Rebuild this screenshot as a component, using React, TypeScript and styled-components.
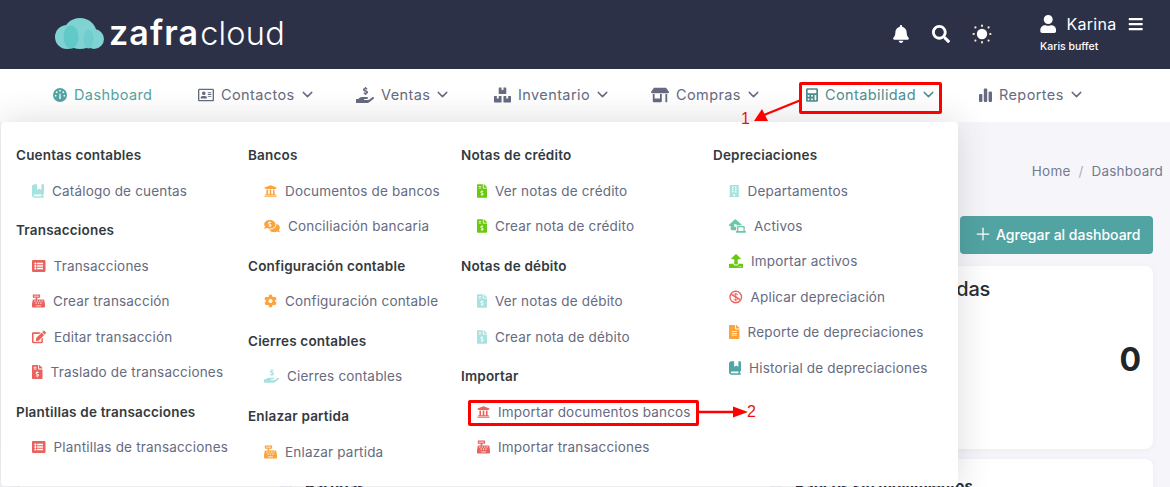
import React from 'react';
import styled, { createGlobalStyle } from 'styled-components';
import {
  FaBars, FaBell, FaBoxes, FaBuilding, FaCalculator, FaCashRegister, FaCog,
  FaCommentsDollar, FaEdit, FaFileAlt, FaFileInvoiceDollar, FaHandHoldingUsd, FaListAlt, FaRegAddressCard, FaSearch,
  FaStoreAlt, FaUniversity, FaUpload, FaUser,
} from 'react-icons/fa';
import { FaBookBookmark, FaHouseLaptop } from 'react-icons/fa6';
import { ChevronDown, Plus } from 'lucide-react';

const GlobalStyle = createGlobalStyle`
  html, body {
    margin: 0;
    height: 487px;
    overflow: hidden;
    background: #f6f6fa;
    font-family: Inter, "Open Sans", sans-serif;
  }
`;

const Page = styled.div`
  position: relative;
  width: 1170px;
  height: 487px;
  overflow: hidden;
`;

const Header = styled.header`
  display: flex;
  align-items: center;
  height: 69px;
  padding: 0 27px 0 55px;
  box-sizing: border-box;
  background: #2c3148;
  color: #fff;
`;

const Logo = styled.div`
  display: flex;
  align-items: center;
  gap: 4px;
  margin-top: -2px;
`;

const LogoText = styled.span<{ $light?: boolean }>`
  font-size: ${p => (p.$light ? '32.5px' : '34px')};
  font-weight: ${p => (p.$light ? 300 : 600)};
  letter-spacing: ${p => (p.$light ? '0.2px' : '1.1px')};
  margin-left: ${p => (p.$light ? '1px' : '0')};
  line-height: 40px;
`;

const HeaderTools = styled.div`
  display: flex;
  align-items: center;
  gap: 22px;
  margin-left: auto;
  font-size: 18px;
  margin-top: -2px;
`;

const UserBlock = styled.div`
  display: flex;
  flex-direction: column;
  gap: 7px;
  width: 103px;
  margin-left: 26px;
  margin-top: 1px;
`;

const UserRow = styled.div`
  display: flex;
  align-items: center;
  font-size: 16px;
  font-weight: 400;
  height: 18px;
  svg:first-child { margin-right: 10px; width: 17px; height: 18px; }
  svg:last-child { margin-left: 11px; }
`;

const UserName = styled.span`
  letter-spacing: 0.3px;
`;

const UserSub = styled.span`
  font-size: 10.5px;
  font-weight: 500;
  line-height: 13px;
`;

const Nav = styled.nav`
  display: flex;
  align-items: center;
  height: 53px;
  padding: 0 0 2px 53px;
  box-sizing: border-box;
  background: #fff;
`;

const NavItem = styled.a<{ $w: number; $color?: string }>`
  display: flex;
  align-items: center;
  flex: none;
  width: ${p => p.$w}px;
  font-size: 14.5px;
  letter-spacing: 0.4px;
  color: ${p => p.$color || '#666b80'};
`;

const NavIcon = styled.span<{ $w: number }>`
  display: inline-flex;
  justify-content: center;
  width: ${p => p.$w}px;
  margin-right: 7px;
  svg {
    width: ${p => p.$w}px;
    height: 16px;
  }
`;

const Chevron = styled(ChevronDown)`
  flex: none;
  width: 17px;
  height: 17px;
  margin-left: 4px;
`;

const Content = styled.main`
  padding: 0 17px 0 20px;
`;

const Crumbs = styled.div`
  display: flex;
  justify-content: flex-end;
  gap: 8px;
  margin: 0 -10px 0 0;
  padding-top: 41px;
  height: 17px;
  font-size: 13.5px;
  letter-spacing: 0.2px;
  line-height: 17px;
  color: #747a90;
`;

const CrumbSep = styled.span`
  color: #a8abb8;
`;

const ActionRow = styled.div`
  display: flex;
  justify-content: flex-end;
  margin-top: 36px;
`;

const AddButton = styled.button`
  display: flex;
  align-items: center;
  gap: 3px;
  width: 193px;
  height: 38px;
  padding: 0 0 2px 13px;
  border: 0;
  border-radius: 4px;
  background: #52a4a3;
  color: #fff;
  font: 500 14px Inter, sans-serif;
`;

const CardGrid = styled.section`
  display: grid;
  grid-template-columns: 260px 478px 371px;
  gap: 10px 12px;
  margin-top: 12px;
`;

const Card = styled.div<{ $h: number }>`
  position: relative;
  height: ${p => p.$h}px;
  padding: 11px 12px 0 13px;
  box-sizing: border-box;
  background: #fff;
  border-radius: 8px;
  box-shadow: 0 1px 6px rgba(40, 44, 70, 0.05);
`;

const CardTitle = styled.div<{ $small?: boolean }>`
  font-size: ${p => (p.$small ? '15px' : '20px')};
  font-weight: ${p => (p.$small ? 700 : 500)};
  letter-spacing: ${p => (p.$small ? '0' : '-0.25px')};
  color: #2b2e36;
  line-height: 24px;
  margin-top: ${p => (p.$small ? '5px' : '0')};
`;

const CardValue = styled.div`
  margin-top: 37px;
  text-align: right;
  font-size: 32px;
  font-weight: 700;
  line-height: 44px;
  color: #212529;
`;

const Menu = styled.div`
  position: absolute;
  left: 1px;
  top: 122px;
  width: 957px;
  height: 364px;
  box-sizing: border-box;
  padding: 16px 0 0 15px;
  display: grid;
  grid-template-columns: 232px 213px 252px 1fr;
  background: #fff;
  border-radius: 4px;
  box-shadow: 0 0 34px rgba(30, 32, 50, 0.16);
`;

const Section = styled.div`
  margin-bottom: 4.8px;
`;

const SectionTitle = styled.div`
  height: 35px;
  line-height: 35px;
  font-size: 13.5px;
  font-weight: 600;
  letter-spacing: 0.19px;
  color: #343a40;
`;

const Item = styled.a`
  display: flex;
  align-items: center;
  height: 35.4px;
  padding-left: 16px;
  font-size: 13.5px;
  letter-spacing: 0.18px;
  color: #666b80;
  white-space: nowrap;
`;

const ItemIcon = styled.span<{ $w: number; $color: string }>`
  display: inline-flex;
  flex: none;
  justify-content: flex-start;
  width: ${p => p.$w}px;
  margin-right: 8px;
  color: ${p => p.$color};
  svg {
    width: ${p => p.$w}px;
    height: 14px;
  }
`;

const RedBox = styled.div<{ $x: number; $y: number; $w: number; $h: number }>`
  position: absolute;
  left: ${p => p.$x}px;
  top: ${p => p.$y}px;
  width: ${p => p.$w}px;
  height: ${p => p.$h}px;
  box-sizing: border-box;
  border: 3px solid #f00;
  border-radius: 2px;
`;

const Arrow = styled.svg<{ $x: number; $y: number }>`
  position: absolute;
  left: ${p => p.$x}px;
  top: ${p => p.$y}px;
`;

const StepLabel = styled.span<{ $x: number; $y: number }>`
  position: absolute;
  left: ${p => p.$x}px;
  top: ${p => p.$y}px;
  font: 16px/18px "Liberation Sans", sans-serif;
  color: #e81010;
`;

const CloudLogo = () => (
  <svg width="50" height="32" viewBox="0 0 50 32">
    <circle cx="12" cy="19" r="12" fill="#7fd3d3" />
    <ellipse cx="25" cy="15.5" rx="16.5" ry="15.5" fill="#7fd3d3" />
    <circle cx="39" cy="21" r="10" fill="#7fd3d3" />
    <ellipse cx="16" cy="19" rx="7.5" ry="11.5" fill="#62c9c9" />
    <ellipse cx="33.5" cy="21" rx="5" ry="9.5" fill="#6fcdcd" />
  </svg>
);

const SunIcon = () => (
  <svg width="20" height="20" viewBox="0 0 20 20">
    <circle cx="10" cy="10" r="5.2" fill="#fff" />
    <g fill="#ffe9b8">
      <rect x="9" y="0.5" width="2" height="2.4" rx="1" />
      <rect x="9" y="17.1" width="2" height="2.4" rx="1" />
      <rect x="0.5" y="9" width="2.4" height="2" rx="1" />
      <rect x="17.1" y="9" width="2.4" height="2" rx="1" />
      <circle cx="3.4" cy="3.4" r="1.1" />
      <circle cx="16.6" cy="3.4" r="1.1" />
      <circle cx="3.4" cy="16.6" r="1.1" />
      <circle cx="16.6" cy="16.6" r="1.1" />
    </g>
  </svg>
);

const GaugeIcon = () => (
  <svg viewBox="0 0 16 16">
    <circle cx="8" cy="8" r="8" fill="currentColor" />
    <g fill="#fff">
      <circle cx="8" cy="3" r="1" />
      <circle cx="4.2" cy="4.8" r="1" />
      <circle cx="11.8" cy="4.8" r="1" />
      <circle cx="3" cy="8.8" r="1" />
      <circle cx="13" cy="8.8" r="1" />
      <path d="M7.2 12.6 7.4 6.2h1.2l.2 6.4Z" />
    </g>
  </svg>
);

const BarsIcon = () => (
  <svg viewBox="0 0 13 16" fill="currentColor">
    <rect x="0" y="7" width="3.4" height="8" rx="1" />
    <rect x="4.8" y="1.5" width="3.4" height="13.5" rx="1" />
    <rect x="9.6" y="4.5" width="3.4" height="10.5" rx="1" />
  </svg>
);

const NoDollarIcon = () => (
  <svg viewBox="0 0 14 14" fill="none" stroke="currentColor">
    <circle cx="7" cy="7" r="6" strokeWidth="1.4" />
    <path d="M9.2 4.8C8.6 4 7.8 3.8 7 3.8c-1.3 0-2.1.7-2.1 1.6C4.9 7.6 9.2 6.4 9.2 8.6c0 1-.9 1.6-2.2 1.6-.9 0-1.7-.3-2.3-1.1M7 2.8v8.4" strokeWidth="1" />
    <path d="M2.4 4.2 11.6 9.8" strokeWidth="1.4" />
  </svg>
);

type MenuItem = { label: string; icon: React.ReactNode; color: string; w: number };
type MenuSection = { title: string; items: MenuItem[] };

const RED = '#e9635e';
const ORANGE = '#fca43c';
const TEAL = '#a8e2e0';
const GREEN = '#69c90f';

const columns: MenuSection[][] = [
  [
    { title: 'Cuentas contables', items: [{ label: 'Catálogo de cuentas', icon: <FaBookBookmark />, color: TEAL, w: 12 }] },
    {
      title: 'Transacciones',
      items: [
        { label: 'Transacciones', icon: <FaListAlt />, color: RED, w: 13.5 },
        { label: 'Crear transacción', icon: <FaCashRegister />, color: RED, w: 13 },
        { label: 'Editar transacción', icon: <FaEdit />, color: RED, w: 14 },
        { label: 'Traslado de transacciones', icon: <FaFileInvoiceDollar />, color: RED, w: 10.5 },
      ],
    },
    { title: 'Plantillas de transacciones', items: [{ label: 'Plantillas de transacciones', icon: <FaListAlt />, color: RED, w: 13.5 }] },
  ],
  [
    {
      title: 'Bancos',
      items: [
        { label: 'Documentos de bancos', icon: <FaUniversity />, color: ORANGE, w: 13 },
        { label: 'Conciliación bancaria', icon: <FaCommentsDollar />, color: ORANGE, w: 16 },
      ],
    },
    { title: 'Configuración contable', items: [{ label: 'Configuración contable', icon: <FaCog />, color: ORANGE, w: 13 }] },
    { title: 'Cierres contables', items: [{ label: 'Cierres contables', icon: <FaHandHoldingUsd />, color: TEAL, w: 15 }] },
    { title: 'Enlazar partida', items: [{ label: 'Enlazar partida', icon: <FaCashRegister />, color: ORANGE, w: 13 }] },
  ],
  [
    {
      title: 'Notas de crédito',
      items: [
        { label: 'Ver notas de crédito', icon: <FaFileInvoiceDollar />, color: GREEN, w: 10 },
        { label: 'Crear nota de crédito', icon: <FaFileInvoiceDollar />, color: GREEN, w: 10 },
      ],
    },
    {
      title: 'Notas de débito',
      items: [
        { label: 'Ver notas de débito', icon: <FaFileInvoiceDollar />, color: TEAL, w: 10 },
        { label: 'Crear nota de débito', icon: <FaFileInvoiceDollar />, color: TEAL, w: 10 },
      ],
    },
    {
      title: 'Importar',
      items: [
        { label: 'Importar documentos bancos', icon: <FaUniversity />, color: RED, w: 13 },
        { label: 'Importar transacciones', icon: <FaCashRegister />, color: RED, w: 13 },
      ],
    },
  ],
  [
    {
      title: 'Depreciaciones',
      items: [
        { label: 'Departamentos', icon: <FaBuilding />, color: TEAL, w: 10.5 },
        { label: 'Activos', icon: <FaHouseLaptop />, color: '#6bc6ab', w: 17 },
        { label: 'Importar activos', icon: <FaUpload />, color: GREEN, w: 14 },
        { label: 'Aplicar depreciación', icon: <NoDollarIcon />, color: RED, w: 13.5 },
        { label: 'Reporte de depreciaciones', icon: <FaFileAlt />, color: ORANGE, w: 10.5 },
        { label: 'Historial de depreciaciones', icon: <FaBookBookmark />, color: '#4fa6a6', w: 12 },
      ],
    },
  ],
];

const navItems = [
  { label: 'Dashboard', icon: <GaugeIcon />, iconW: 14, w: 145, color: '#52a4a3', noChevron: true },
  { label: 'Contactos', icon: <FaRegAddressCard />, iconW: 16, w: 158 },
  { label: 'Ventas', icon: <FaHandHoldingUsd />, iconW: 18, w: 138 },
  { label: 'Inventario', icon: <FaBoxes />, iconW: 17, w: 157 },
  { label: 'Compras', icon: <FaStoreAlt />, iconW: 18, w: 155 },
  { label: 'Contabilidad', icon: <FaCalculator />, iconW: 12, w: 173, color: '#4d8f8f' },
  { label: 'Reportes', icon: <BarsIcon />, iconW: 13, w: 140 },
];

export default function App() {
  return (
    <Page>
      <GlobalStyle />
      <Header>
        <Logo>
          <CloudLogo />
          <div>
            <LogoText>zafra</LogoText>
            <LogoText $light>cloud</LogoText>
          </div>
        </Logo>
        <HeaderTools>
          <FaBell />
          <FaSearch />
          <SunIcon />
          <UserBlock>
            <UserRow>
              <FaUser />
              <UserName>Karina</UserName>
              <FaBars />
            </UserRow>
            <UserSub>Karis buffet</UserSub>
          </UserBlock>
        </HeaderTools>
      </Header>

      <Nav>
        {navItems.map(n => (
          <NavItem key={n.label} $w={n.w} $color={n.color}>
            <NavIcon $w={n.iconW}>{n.icon}</NavIcon>
            {n.label}
            {!n.noChevron && <Chevron />}
          </NavItem>
        ))}
      </Nav>

      <Content>
        <Crumbs>
          <span>Home</span>
          <CrumbSep>/</CrumbSep>
          <span>Dashboard</span>
        </Crumbs>
        <ActionRow>
          <AddButton>
            <Plus size={20} strokeWidth={1.5} />
            Agregar al dashboard
          </AddButton>
        </ActionRow>
        <CardGrid>
          <Card $h={183} />
          <Card $h={183} />
          <Card $h={183}>
            <CardTitle>Facturas no pagadas</CardTitle>
            <CardValue>0</CardValue>
          </Card>
          <Card $h={120} />
          <Card $h={120}>
            <CardTitle $small>Partidas</CardTitle>
          </Card>
          <Card $h={120}>
            <CardTitle $small>Bancos sin movimientos</CardTitle>
          </Card>
        </CardGrid>
      </Content>

      <Menu>
        {columns.map((sections, i) => (
          <div key={i}>
            {sections.map(s => (
              <Section key={s.title}>
                <SectionTitle>{s.title}</SectionTitle>
                {s.items.map(it => (
                  <Item key={it.label}>
                    <ItemIcon $w={it.w} $color={it.color}>{it.icon}</ItemIcon>
                    {it.label}
                  </Item>
                ))}
              </Section>
            ))}
          </div>
        ))}
      </Menu>

      <RedBox $x={799} $y={82} $w={143} $h={32} />
      <RedBox $x={468} $y={400} $w={231} $h={26} />
      <Arrow $x={750} $y={95} width="52" height="30" viewBox="0 0 52 30">
        <path d="M51 5 14 20" stroke="#f00" strokeWidth="2.4" />
        <path d="M4 26 12 14 18 26Z" fill="#f00" />
      </Arrow>
      <Arrow $x={697} $y={404} width="52" height="16" viewBox="0 0 52 16">
        <path d="M0 8H38" stroke="#f00" strokeWidth="2.4" />
        <path d="M51 8 36 2.5V13.5Z" fill="#f00" />
      </Arrow>
      <StepLabel $x={741} $y={110}>1</StepLabel>
      <StepLabel $x={747} $y={403}>2</StepLabel>
    </Page>
  );
}
